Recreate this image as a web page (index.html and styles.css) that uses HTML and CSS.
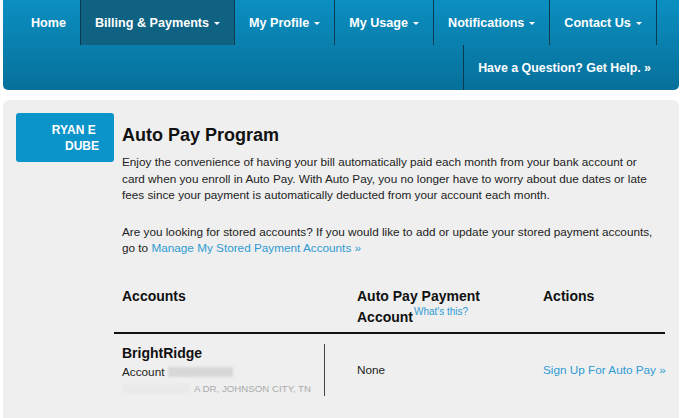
FILE: index.html
```html
<!DOCTYPE html>
<html>
<head>
<meta charset="utf-8">
<title>Auto Pay Program</title>
<link rel="stylesheet" href="styles.css">
</head>
<body>
<div class="page">
  <nav class="topnav">
    <ul class="menu">
      <li class="menu-item">Home</li>
      <li class="menu-item active">Billing &amp; Payments<span class="caret"></span></li>
      <li class="menu-item">My Profile<span class="caret"></span></li>
      <li class="menu-item">My Usage<span class="caret"></span></li>
      <li class="menu-item">Notifications<span class="caret"></span></li>
      <li class="menu-item">Contact Us<span class="caret"></span></li>
    </ul>
    <div class="help-row">
      <a class="help-link" href="#">Have a Question? Get Help. &raquo;</a>
    </div>
  </nav>

  <section class="panel">
    <aside class="sidebar">
      <div class="user-box">RYAN E&nbsp;<br>DUBE</div>
    </aside>
    <main class="main">
      <h1 class="title">Auto Pay Program</h1>
      <p class="intro">Enjoy the convenience of having your bill automatically paid each month from your bank account or card when you enroll in Auto Pay. With Auto Pay, you no longer have to worry about due dates or late fees since your payment is automatically deducted from your account each month.</p>
      <p class="intro second">Are you looking for stored accounts? If you would like to add or update your stored payment accounts, go to <a class="link" href="#">Manage My Stored Payment Accounts &raquo;</a></p>

      <div class="acct-table">
        <div class="th">Accounts</div>
        <div class="th">Auto Pay Payment Account<sup class="whats">What's this?</sup></div>
        <div class="th">Actions</div>

        <div class="td acct-cell">
          <div class="acct-info">
            <div class="acct-name">BrightRidge</div>
            <div class="acct-num">Account <span class="redacted"></span></div>
            <div class="acct-addr"><span class="redacted faint"></span>A DR, JOHNSON CITY, TN</div>
          </div>
        </div>
        <div class="td mid">None</div>
        <div class="td mid"><a class="link" href="#">Sign Up For Auto Pay &raquo;</a></div>
      </div>
    </main>
  </section>
</div>
</body>
</html>
```

FILE: styles.css
```css
html, body {
  margin: 0;
  padding: 0;
  background: #ffffff;
}

body {
  font-family: "Liberation Sans", Arial, sans-serif;
  color: #222;
  font-size: 11.75px;
}

.page {
  padding: 0 1px 0 3px;
}

/* ---------- top navigation ---------- */
.topnav {
  height: 90px;
  background: linear-gradient(#0b8fc1, #06709a);
  border-radius: 0 0 5px 5px;
}

.menu {
  display: flex;
  list-style: none;
  margin: 0;
  padding: 0 0 0 14px;
  height: 45px;
}

.menu-item {
  display: flex;
  align-items: center;
  padding: 0 14px;
  border-right: 1px solid #0b3b52;
  color: #fff;
  font-weight: bold;
  font-size: 12.6px;
  white-space: nowrap;
}

.menu-item.active {
  background: #0f6282;
}

.caret {
  display: inline-block;
  width: 0;
  height: 0;
  margin-left: 5px;
  margin-top: 1px;
  border-left: 3px solid transparent;
  border-right: 3px solid transparent;
  border-top: 3px solid #fff;
}

.help-row {
  display: flex;
  justify-content: flex-end;
  height: 45px;
  padding-right: 14px;
}

.help-link {
  display: flex;
  align-items: center;
  padding: 0 14px;
  border-left: 1px solid #0b3b52;
  color: #fff;
  font-weight: bold;
  font-size: 12.4px;
  text-decoration: none;
}

/* ---------- content panel ---------- */
.panel {
  display: flex;
  margin-top: 10px;
  background: #efefef;
  border-radius: 6px;
  padding: 13px 14px 30px 13px;
}

.sidebar {
  flex: 0 0 98px;
}

.user-box {
  height: 49px;
  box-sizing: border-box;
  background: #0b94c9;
  border-radius: 3px;
  color: #fff;
  font-weight: bold;
  font-size: 12px;
  line-height: 16px;
  text-align: right;
  padding: 9px 15px 0 0;
}

.main {
  flex: 1;
}

.title {
  margin: 11px 0 0;
  padding: 0 9px 0 8px;
  font-size: 18px;
  line-height: 22px;
  color: #111;
  font-weight: bold;
}

.intro {
  margin: 8px 0 0;
  padding: 0 9px 0 8px;
  font-size: 11.75px;
  line-height: 16.6px;
  color: #222;
}

.intro.second {
  margin-top: 20px;
}

.link {
  color: #2e9bd3;
  text-decoration: none;
}

/* ---------- accounts table ---------- */
.acct-table {
  display: grid;
  grid-template-columns: 234px 186px 131px;
  margin-top: 29px;
}

.th {
  padding: 0 0 4px 9px;
  font-size: 14px;
  line-height: 21px;
  font-weight: bold;
  color: #111;
  border-bottom: 2px solid #111;
}

.th:first-child {
  padding-left: 8px;
}

.whats {
  display: inline-block;
  font-size: 10px;
  font-weight: normal;
  color: #2e9bd3;
  vertical-align: 7px;
  line-height: 10px;
  margin-left: 1px;
}

.td {
  padding: 10px 0 10px 9px;
}

.td.mid {
  display: flex;
  align-items: center;
  font-size: 11.75px;
  color: #222;
  white-space: nowrap;
}

.acct-cell {
  padding-left: 8px;
}

.acct-info {
  width: 202px;
  border-right: 1px solid #444;
}

.acct-name {
  font-size: 14px;
  line-height: 18px;
  font-weight: bold;
  color: #111;
}

.acct-num {
  font-size: 11.75px;
  line-height: 20px;
  color: #222;
}

.acct-addr {
  font-size: 9.7px;
  line-height: 14px;
  color: #ababab;
  text-align: right;
  padding-right: 13px;
  position: relative;
}

.redacted {
  display: inline-block;
  width: 65px;
  height: 10px;
  background: #d8d8d8;
  vertical-align: -1px;
  filter: blur(1px);
}

.redacted.faint {
  position: absolute;
  left: 0;
  top: 2px;
  width: 68px;
  background: #e9e9e9;
}
```
